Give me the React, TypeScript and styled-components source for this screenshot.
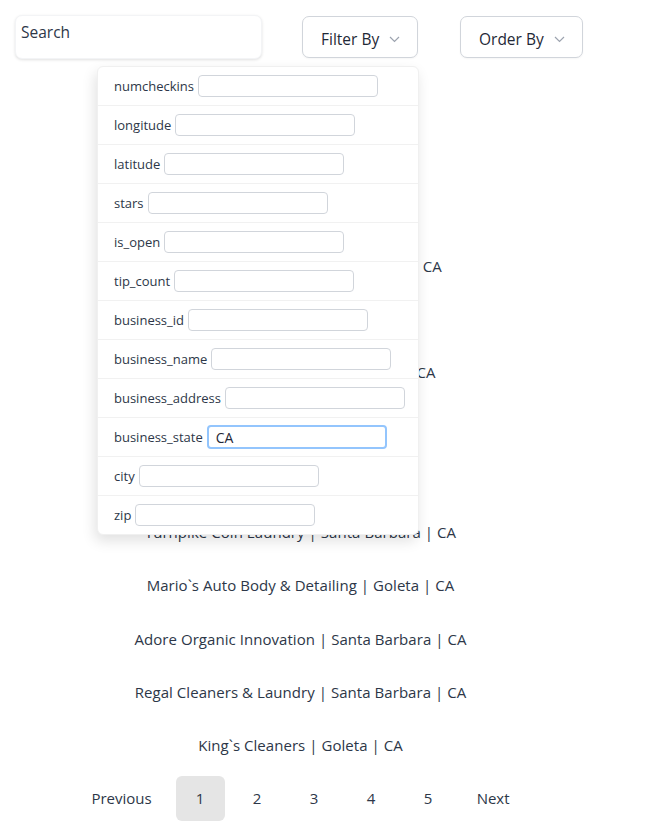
import React from "react";
import styled, { createGlobalStyle } from "styled-components";

const Global = createGlobalStyle`
  html, body { margin: 0; padding: 0; background: #ffffff; }
  body { font-family: "Open Sans", "Noto Sans", sans-serif; color: #374151; }
  * { box-sizing: border-box; }
`;

const Page = styled.div`
  width: 665px;
  min-height: 836px;
  position: relative;
`;

const Header = styled.div`
  display: flex;
  align-items: flex-start;
  padding: 15px 0 0 15px;
  position: relative;
  z-index: 5;
`;

const SearchBox = styled.input`
  width: 247px;
  height: 44px;
  border: 1px solid #f3f4f6;
  border-radius: 7px;
  box-shadow: 0 1px 3px rgba(0, 0, 0, 0.12);
  font-family: inherit;
  font-size: 15.5px;
  color: #374151;
  padding: 0 5px 10px;
  outline: none;
  &::placeholder { color: #2d3748; }
`;

const MenuWrap = styled.div<{ $ml: number }>`
  position: relative;
  margin-left: ${(p) => p.$ml}px;
  margin-top: 1px;
`;

const MenuButton = styled.button<{ $w: number }>`
  width: ${(p) => p.$w}px;
  height: 42px;
  display: flex;
  align-items: center;
  gap: 10px;
  padding: 4px 0 0 18px;
  background: #fff;
  border: 1px solid #d1d5db;
  border-radius: 7px;
  box-shadow: 0 1px 2px rgba(0, 0, 0, 0.04);
  font-family: inherit;
  font-size: 15.5px;
  color: #1f2937;
`;

const Chevron = () => (
  <svg width="11" height="7" viewBox="0 0 11 7" fill="none">
    <path d="M1 1l4.5 4.5L10 1" stroke="#9ca3af" strokeWidth="1.2" />
  </svg>
);

const Panel = styled.div`
  position: absolute;
  top: 50px;
  right: -1px;
  width: 322px;
  background: #fff;
  border: 1px solid #f0f0f0;
  border-radius: 6px;
  box-shadow: -2px 6px 14px rgba(0, 0, 0, 0.12);
  z-index: 10;
  overflow: hidden;
`;

const FieldRow = styled.div`
  height: 39px;
  display: flex;
  align-items: center;
  padding-left: 16px;
  border-top: 1px solid #f1f1f1;
  &:first-child { border-top: none; height: 38px; }
`;

const FieldLabel = styled.label`
  font-size: 13px;
  color: #2d3748;
  margin-right: 4px;
`;

const FieldInput = styled.input<{ $focus?: boolean }>`
  width: 180px;
  height: 22px;
  border: 1px solid #d1d5db;
  border-radius: 4px;
  font-family: inherit;
  font-size: 14px;
  color: #1f2937;
  padding: 0 8px;
  outline: none;
  ${(p) =>
    p.$focus &&
    `border: 2px solid #93c5fd; height: 24px; padding: 0 7px;`}
`;

const List = styled.div`
  width: 601px;
  display: flex;
  flex-direction: column;
  align-items: center;
  padding-top: 180px;
`;

const Item = styled.div`
  height: 53.3px;
  display: flex;
  align-items: center;
  justify-content: center;
  font-size: 15px;
  letter-spacing: 0.05px;
  color: #2d3748;
  width: 100%;
`;

const Pager = styled.div`
  width: 601px;
  display: flex;
  justify-content: center;
  gap: 8px;
  margin-top: 4px;
`;

const PageBtn = styled.button<{ $active?: boolean }>`
  min-width: 49px;
  height: 45px;
  padding: 0 16px;
  border: none;
  border-radius: 6px;
  background: ${(p) => (p.$active ? "#e5e5e5" : "transparent")};
  font-family: inherit;
  font-size: 15px;
  color: #2d3748;
`;

const fields = [
  "numcheckins",
  "longitude",
  "latitude",
  "stars",
  "is_open",
  "tip_count",
  "business_id",
  "business_name",
  "business_address",
  "business_state",
  "city",
  "zip",
];

const items = [
  "Quick Laundromat | Santa Barbara | CA",
  "Coin Wash | Goleta | CA",
  "Bubbles Laundry | Santa Barbara | CA",
  "Wash & Fold | Goleta | CA",
  "Suds Laundry | Goleta | CA",
  "Turnpike Coin Laundry | Santa Barbara | CA",
  "Mario`s Auto Body & Detailing | Goleta | CA",
  "Adore Organic Innovation | Santa Barbara | CA",
  "Regal Cleaners & Laundry | Santa Barbara | CA",
  "King`s Cleaners | Goleta | CA",
];

export default function App() {
  return (
    <Page>
      <Global />
      <Header>
        <SearchBox placeholder="Search" />
        <MenuWrap $ml={40}>
          <MenuButton $w={116}>
            Filter By <Chevron />
          </MenuButton>
          <Panel>
            {fields.map((f) => (
              <FieldRow key={f}>
                <FieldLabel>{f}</FieldLabel>
                {f === "business_state" ? (
                  <FieldInput $focus defaultValue="CA" />
                ) : (
                  <FieldInput />
                )}
              </FieldRow>
            ))}
          </Panel>
        </MenuWrap>
        <MenuWrap $ml={42}>
          <MenuButton $w={123}>
            Order By <Chevron />
          </MenuButton>
        </MenuWrap>
      </Header>
      <List>
        {items.map((t) => (
          <Item key={t}>{t}</Item>
        ))}
      </List>
      <Pager>
        <PageBtn>Previous</PageBtn>
        <PageBtn $active>1</PageBtn>
        <PageBtn>2</PageBtn>
        <PageBtn>3</PageBtn>
        <PageBtn>4</PageBtn>
        <PageBtn>5</PageBtn>
        <PageBtn>Next</PageBtn>
      </Pager>
    </Page>
  );
}
